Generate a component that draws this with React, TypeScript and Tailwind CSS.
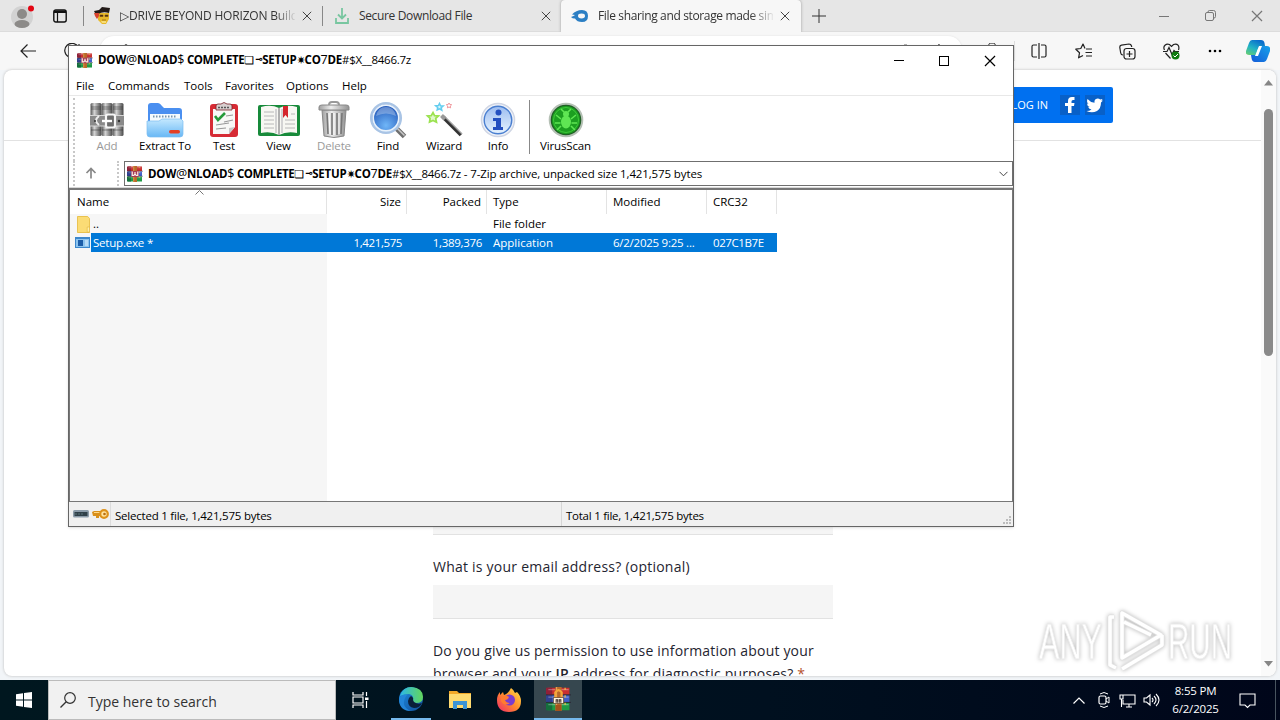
import React from "react";

type P = { className?: string };

const Archive = ({ className = "", lock = false }: P & { lock?: boolean }) => (
  <svg viewBox="0 0 32 32" className={className} preserveAspectRatio="none">
    <path d="M2 1h28v9H2z" fill="#c9302f" />
    <path d="M2 11h28v9H2z" fill="#3f5fc8" />
    <path d="M2 21h28v10H2z" fill="#1f9a45" />
    <path d="M0 1h8v9H0z" fill="#8f2038" />
    <path d="M0 11h8v9H0z" fill="#31408f" />
    <path d="M0 21h8v10H0z" fill="#146f3c" />
    <path d="M3 3.500h26M3 13.500h26M3 23.500h26" stroke="#fff" strokeOpacity=".3" strokeWidth="1.600" />
    <path d="M0 10.500h32M0 20.500h32" stroke="#251a2a" strokeOpacity=".7" strokeWidth="1.200" />
    <path d="M24.500 1v30" stroke="#f2c14a" strokeOpacity=".75" strokeWidth="2" strokeDasharray="3 7" />
    <rect x="12" y="0" width="8" height="32" fill="#b8692a" />
    <path d="M13.500 0v32" stroke="#e3a455" strokeWidth="1.500" />
    {lock ? (
      <>
        <path d="M12 15V7q4-6 8 0v8" fill="none" stroke="#f4a63a" strokeWidth="3" />
        <path d="M9.500 14h13v8h-13z" fill="#fff3dc" stroke="#4c2a10" strokeWidth=".8" />
        <path d="M13 21v-4h2v4M17 21v-4h2v4" fill="none" stroke="#3a2a22" strokeWidth="1.300" />
        <path d="M12.500 24h7v8h-7z" fill="#a3521c" />
      </>
    ) : (
      <>
        <rect x="8.500" y="10" width="15" height="12" rx="1.500" fill="#a83a55" />
        <path d="M10.500 11v8h3l2.500-3 2.500 3h3v-8M16 12v5" fill="none" stroke="#fbeee6" strokeWidth="2.400" />
      </>
    )}
  </svg>
);

const GrayArchive = () => (
  <svg viewBox="0 0 34 36" className="h-[36px] w-[34px]">
    <defs>
      <linearGradient id="bk" x1="0" x2="1">
        <stop offset="0" stopColor="#555" />
        <stop offset=".35" stopColor="#d5d5d5" />
        <stop offset="1" stopColor="#484848" />
      </linearGradient>
    </defs>
    {[0, 11, 22].map((x) => (
      <g key={x}>
        <rect x={x + 0.5} y="1" width="11" height="33" rx="1.500" fill="url(#bk)" />
        <path d={`M${x + 1} 5h10M${x + 1} 7h10M${x + 1} 28h10`} stroke="#333" strokeOpacity=".55" />
      </g>
    ))}
    <rect x="0" y="13" width="34" height="11" fill="#8a8a8a" />
    <path d="M0 13.500h34M0 24h34" stroke="#d5d5d5" />
    <path d="M9 14q-6 4.500 0 9" stroke="#eee" strokeWidth="2" fill="none" />
    <rect x="16" y="12.500" width="9" height="13" rx="2" fill="#6d6d6d" stroke="#f6f6f6" strokeWidth="2.200" />
    <path d="M12 19h10" stroke="#fff" strokeWidth="2.400" />
    <circle cx="29" cy="19" r="1.200" fill="#333" />
    <circle cx="5" cy="19" r="1" fill="#333" />
  </svg>
);

const ExtractIcon = () => (
  <svg viewBox="0 0 38 36" className="h-[36px] w-[38px]">
    <defs>
      <linearGradient id="fo" x1="0" y1="0" x2="0" y2="1">
        <stop offset="0" stopColor="#c4e8fe" />
        <stop offset="1" stopColor="#68b8f5" />
      </linearGradient>
    </defs>
    <path d="M2 4q0-3 3-3h7q2 0 4 3l2 2h15q3 0 3 3v18H2z" fill="#4a8ff0" />
    <rect x="4" y="12" width="30" height="12" fill="#f4fafd" />
    <path d="M7 14.500h24" stroke="#7996b0" strokeWidth="2" strokeDasharray="1.500 1.500" />
    <path d="M1 19h12l3-2h19l2 2v13q0 3-3 3H4q-3 0-3-3z" fill="url(#fo)" stroke="#7dbdf0" strokeWidth=".7" />
    <rect x="23" y="28" width="11" height="3.500" rx="1.700" fill="#e33f24" />
  </svg>
);

const TestIcon = () => (
  <svg viewBox="0 0 30 36" className="h-[36px] w-[30px]">
    <rect x="1" y="2" width="28" height="33" rx="3" fill="#d62b34" />
    <path d="M4 7h22v18l-6 7H4z" fill="#f8f8f6" />
    <path d="M26 25l-6 7v-6z" fill="#c8c8c8" />
    <path d="M7 8V4q0-2 2-2h3q3-3 6 0h3q2 0 2 2v4z" fill="#d8cfcf" stroke="#7a2229" strokeWidth=".8" />
    <path d="M9 5.500h12" stroke="#555" strokeWidth="1.500" strokeDasharray="2 1" />
    <path d="M6 14l3 4 7-7" stroke="#259a3a" strokeWidth="2.600" fill="none" />
    <path d="M17 14l7-1M15 20l9-2M7 23l13-2M7 27l10-1" stroke="#999" strokeWidth="1.200" />
  </svg>
);

const ViewIcon = () => (
  <svg viewBox="0 0 42 36" className="h-[36px] w-[42px]">
    <rect x="0" y="3" width="42" height="31" rx="2" fill="#178a3a" />
    <path d="M3 5q10-3 18 1 8-4 18-1v26q-10-2-18 2-8-4-18-2z" fill="#f7f7f2" />
    <path d="M21 6v27" stroke="#999" strokeWidth="1.500" />
    <path d="M18 7v24M24 7v24" stroke="#d3d3d3" strokeWidth="2" />
    <path d="M6 10h10M6 14h10M6 18h10M6 22h10M6 26h10M27 18h10M27 22h10M27 26h10M33 12h4" stroke="#b8b8b8" />
    <path d="M25 4h5v12l-2.500-3-2.500 3z" fill="#d4252c" />
  </svg>
);

const DeleteIcon = () => (
  <svg viewBox="0 0 32 38" className="h-[38px] w-[32px]">
    <defs>
      <linearGradient id="tr" x1="0" x2="1">
        <stop offset="0" stopColor="#a0a0a0" />
        <stop offset=".4" stopColor="#ececec" />
        <stop offset="1" stopColor="#929292" />
      </linearGradient>
    </defs>
    <path d="M4 9h24l-2 26q-10 3-20 0z" fill="url(#tr)" stroke="#888" />
    <path d="M9 12l1 21M14 12v22M19 12v22M24 12l-1 21" stroke="#777" strokeWidth="1.600" />
    <path d="M11 12l1 21M16 12v22M21 12v21" stroke="#fff" strokeWidth="1" />
    <path d="M1 6q0-2 3-2h24q3 0 3 2v3H1z" fill="url(#tr)" stroke="#888" />
    <path d="M11 4q0-3 3-3h4q3 0 3 3" fill="none" stroke="#999" strokeWidth="2" />
  </svg>
);

const FindIcon = () => (
  <svg viewBox="0 0 38 38" className="h-[38px] w-[38px]">
    <defs>
      <radialGradient id="gl" cx=".5" cy=".75" r=".8">
        <stop offset="0" stopColor="#70b6f8" />
        <stop offset="1" stopColor="#1547ad" />
      </radialGradient>
    </defs>
    <path d="M27 27l8.500 8.500" stroke="#6f6f6f" strokeWidth="5" />
    <path d="M27 26l8.500 8.500" stroke="#c9c9c9" strokeWidth="1.500" />
    <circle cx="17" cy="17" r="14.800" fill="url(#gl)" stroke="#a9c4e5" strokeWidth="2.500" />
    <circle cx="17" cy="17" r="12.800" fill="none" stroke="#e9f2fb" strokeWidth="1.700" />
    <path d="M7 15q2-9 10-9t10 9q-10-5-20 0z" fill="#fff" fillOpacity=".28" />
  </svg>
);

const WizardIcon = () => (
  <svg viewBox="0 0 38 38" className="h-[38px] w-[38px]">
    <path d="M18 16L36 34" stroke="#333" strokeWidth="3.800" />
    <path d="M19 15L37 33" stroke="#a5a5a5" strokeWidth="1.100" />
    <path d="M16.500 14.500l3.500 3.500" stroke="#999" strokeWidth="4" />
    <path d="M8 11.500l1.500 3.200 4 .2-2.800 2.500.8 3.800-3.500-1.800L4.500 21l.6-3.700L2.500 15l3.700-.4z" fill="#e0f8cc" stroke="#9be250" strokeWidth="1.700" />
    <path d="M14.500 2.500l1 2.200 2.700.2-2 1.700.6 2.600-2.300-1.300L12.200 9l.5-2.500-2-1.700 2.700-.2z" fill="#d9f6fd" stroke="#63cdef" strokeWidth="1.500" />
    <path d="M24 2l.8 1.500 1.900.2-1.400 1.300.3 1.900L24 6l-1.600.9.300-1.900-1.400-1.300 1.900-.2z" fill="#fff" stroke="#f0969c" strokeWidth="1" />
  </svg>
);

const InfoIcon = () => (
  <svg viewBox="0 0 36 36" className="h-[36px] w-[36px]">
    <defs>
      <linearGradient id="inf" x1="0" y1="0" x2="0" y2="1">
        <stop offset="0" stopColor="#9dbdf0" />
        <stop offset="1" stopColor="#e6f3fe" />
      </linearGradient>
    </defs>
    <circle cx="18" cy="18" r="16.500" fill="#f0f3f9" stroke="#d0d6e4" strokeWidth="1.500" />
    <circle cx="18" cy="18" r="13.800" fill="url(#inf)" stroke="#4a7fd0" strokeWidth="1.400" />
    <circle cx="18.500" cy="10.500" r="3" fill="#2450c0" />
    <path d="M13 16h8v9h2v3H13v-3h3v-6h-3z" fill="#2450c0" />
  </svg>
);

const VirusIcon = () => (
  <svg viewBox="0 0 36 36" className="h-[36px] w-[36px]">
    <circle cx="18" cy="18" r="16.300" fill="#1f5f24" stroke="#b5c0b5" strokeWidth="2" />
    <circle cx="18" cy="18" r="14" fill="#1c9f20" />
    <circle cx="18" cy="18" r="12.500" fill="none" stroke="#3fc83a" />
    <ellipse cx="18" cy="20" rx="5" ry="6.500" fill="#5fe653" />
    <circle cx="18" cy="12" r="3" fill="#5fe653" />
    <path d="M13 17l-5-4M12.500 21H7M13 24l-4 4M23 17l5-4M23.500 21H29M23 24l4 4M16 10l-3-3M20 10l3-3" stroke="#5fe653" strokeWidth="1.600" />
  </svg>
);

const X = ({ className = "" }: P) => (
  <svg viewBox="0 0 10 10" className={className}>
    <path d="M.8.8l8.400 8.400M9.200.8L.8 9.200" stroke="currentColor" strokeWidth="1" />
  </svg>
);

const ArchiveName = () => (
  <>
    <b>DOW</b><span className="text-[12.500px]">@</span><b>NLOAD</b><span className="text-[12.500px]">$</span> <b className="tracking-[-0.400px]">COMPLETE</b>
    <span className="inline-flex w-[18px] justify-between align-baseline font-['DejaVu_Sans'] text-[11px] font-bold leading-none tracking-tighter">
      <span>❏</span>
      <span className="text-[9px]">⊸</span>
    </span>
    <b>SETUP</b>
    <span className="font-['DejaVu_Sans'] text-[11px] font-bold tracking-[-1px]">✷</span>
    <b>CO</b><span className="text-[12.500px]">7</span><b>DE</b>#$X__8466.7z
  </>
);

const tools: { label: string; w: string; icon: React.ReactNode; off?: boolean }[] = [
  { label: "Add", w: "w-[56px]", icon: <GrayArchive />, off: true },
  { label: "Extract To", w: "w-[60px]", icon: <ExtractIcon /> },
  { label: "Test", w: "w-[58px]", icon: <TestIcon /> },
  { label: "View", w: "w-[51px]", icon: <ViewIcon /> },
  { label: "Delete", w: "w-[60px]", icon: <DeleteIcon />, off: true },
  { label: "Find", w: "w-[48px]", icon: <FindIcon /> },
  { label: "Wizard", w: "w-[64px]", icon: <WizardIcon /> },
  { label: "Info", w: "w-[44px]", icon: <InfoIcon /> },
];

const Tool = ({ label, w, icon, off }: (typeof tools)[number]) => (
  <div className={`flex shrink-0 flex-col items-center ${w} ${off ? "text-[#9a9a9a]" : "text-black"}`}>
    <div className="flex h-[40px] items-center justify-center">{icon}</div>
    <span className="-mt-[3px] whitespace-nowrap leading-[18px] tracking-[-0.150px]">{label}</span>
  </div>
);

const cols = "grid grid-cols-[257px_80px_80px_120px_100px_70px]";

function ArchiveWindow() {
  return (
    <div className="absolute left-[68px] top-[45px] flex h-[482px] w-[946px] flex-col border border-[#666] bg-white text-[11.500px] text-black shadow-sm">
      <div className="flex h-[29px] shrink-0 items-center pl-[8px]">
        <Archive className="h-[15px] w-[16px]" />
        <span className="ml-[5px] flex-1 whitespace-nowrap tracking-[-0.250px]"><ArchiveName /></span>
        <div className="flex w-[136px] items-center">
          <span className="flex w-[44px] justify-center"><span className="h-px w-[10px] bg-black" /></span>
          <span className="flex w-[45px] justify-center"><span className="size-[10px] border border-black" /></span>
          <span className="flex w-[47px] justify-center"><X className="size-[12px]" /></span>
        </div>
      </div>
      <div className="flex h-[21px] shrink-0 items-center border-b border-[#e8e8e8] pl-[7px] pt-[2px]">
        <span className="w-[32px]">File</span>
        <span className="w-[76px]">Commands</span>
        <span className="w-[41px]">Tools</span>
        <span className="w-[61px]">Favorites</span>
        <span className="w-[56px]">Options</span>
        <span>Help</span>
      </div>
      <div className="flex h-[65px] shrink-0 pt-[4px]">
        <div className="-mt-[2px] ml-[4px] mr-[4px] w-[2px] border-l-2 border-dotted border-[#c8c8c8]" />
        {tools.map((t) => <Tool key={t.label} {...t} />)}
        <div className="ml-[9px] h-[54px] w-px bg-[#888]" />
        <Tool label="VirusScan" w="w-[71px]" icon={<VirusIcon />} />
      </div>
      <div className="flex h-[27px] shrink-0 items-start border-b border-[#d6d6d6]">
        <div className="ml-[4px] h-[25px] w-[2px] border-l-2 border-dotted border-[#c8c8c8]" />
        <svg viewBox="0 0 12 12" className="ml-[10px] mt-[6px] size-[12px]"><path d="M6 11.500V1.500M1.500 6L6 1.500 10.500 6" fill="none" stroke="#888" strokeWidth="1.700" /></svg>
        <div className="ml-[20px] h-[25px] w-[2px] border-l-2 border-dotted border-[#c8c8c8]" />
        <div className="ml-[5px] flex h-[25px] flex-1 items-center border border-[#6f6f6f] pl-[2px]">
          <Archive className="h-[16px] w-[16px]" />
          <span className="ml-[5px] flex-1 whitespace-nowrap pt-px"><span className="tracking-[-0.250px]"><ArchiveName /></span><span className="tracking-[-0.120px]"> - 7-Zip archive, unpacked size 1,421,575 bytes</span></span>
          <svg viewBox="0 0 9 6" className="mr-[4px] h-[6px] w-[9px]"><path d="M.5.8l4 4 4-4" fill="none" stroke="#444" /></svg>
        </div>
      </div>
      <div className="flex h-[314px] shrink-0 flex-col border border-t-2 border-[#777]">
        <div className={`${cols} h-[24px] shrink-0 leading-[24px]`}>
          <span className="relative border-r border-[#e3e3e3] pl-[7px]">
            Name
            <svg viewBox="0 0 9 5" className="absolute left-[125px] top-0 h-[5px] w-[9px]"><path d="M.5 4.500l4-4 4 4" fill="none" stroke="#777" /></svg>
          </span>
          <span className="border-r border-[#e3e3e3] pr-[5px] text-right">Size</span>
          <span className="border-r border-[#e3e3e3] pr-[5px] text-right">Packed</span>
          <span className="border-r border-[#e3e3e3] pl-[6px]">Type</span>
          <span className="border-r border-[#e3e3e3] pl-[6px]">Modified</span>
          <span className="border-r border-[#e3e3e3] pl-[6px]">CRC32</span>
        </div>
        <div className={`${cols} h-[19px] shrink-0 leading-[20px]`}>
          <div className="flex items-center bg-[#f6f6f6] pl-[7px]">
            <svg viewBox="0 0 14 17" className="h-[17px] w-[13px]" preserveAspectRatio="none"><path d="M.5.500h11l2 2v14H.5z" fill="#fbdc75" stroke="#e8bf4b" /><path d="M11 11h2.500v5H11z" fill="#fff0a8" stroke="#e2b33a" strokeWidth=".6" /></svg>
            <span className="ml-[3px]">..</span>
          </div>
          <span /><span />
          <span className="pl-[6px]">File folder</span>
        </div>
        <div className="flex h-[19px] shrink-0 bg-[#f6f6f6]">
          <div className="flex w-[21px] items-center bg-[#f6f6f6] pl-[5px]">
            <svg viewBox="0 0 15 11" className="h-[11px] w-[15px]"><path d="M0 0h15v11H0z" fill="#3c87cc" /><path d="M1 2h13v8H1z" fill="#8cc4ef" /><path d="M3 3h5v6H3z" fill="#1c5da8" /><path d="M10 4h3M10 6h3M10 8h3" stroke="#e6f4ff" /></svg>
          </div>
          <div className="grid w-[686px] shrink-0 grid-cols-[236px_80px_80px_120px_100px_70px] bg-[#0078d7] leading-[20px] text-white">
            <span className="pl-[2px] tracking-[-0.200px]">Setup.exe *</span>
            <span className="pr-[5px] text-right tracking-[-0.400px]">1,421,575</span>
            <span className="pr-[5px] text-right tracking-[-0.300px]">1,389,376</span>
            <span className="pl-[6px]">Application</span>
            <span className="pl-[6px] tracking-[-0.250px]">6/2/2025 9:25 ...</span>
            <span className="pl-[6px] tracking-[-0.400px]">027C1B7E</span>
          </div>
          <div className="flex-1 bg-white" />
        </div>
        <div className="w-[257px] flex-1 bg-[#f6f6f6]" />
      </div>
      <div className="flex flex-1 items-center bg-[#f0f0f0]">
        <svg viewBox="0 0 16 8" className="ml-[4px] h-[8px] w-[16px]"><rect width="16" height="7.500" rx="1.500" fill="#8a9aa8" /><path d="M1.500 2h13v4h-13z" fill="#304049" /><path d="M2 4h9" stroke="#587078" strokeDasharray="2 1" /></svg>
        <svg viewBox="0 0 17 12" className="ml-[3px] h-[12px] w-[17px]"><path d="M0 4l2-1h8v5H7v2H4V8H1z" fill="#d9901c" /><path d="M2 4.500h8" stroke="#ffd98a" /><circle cx="12" cy="6" r="3.800" fill="#ffe4a0" stroke="#dd921c" strokeWidth="2.200" /><circle cx="12.500" cy="6" r="1.300" fill="#b86c10" /></svg>
        <div className="ml-px h-full w-px bg-[#dcdcdc]" />
        <span className="ml-[4px] w-[446px] pt-[3px] tracking-[-0.220px]">Selected 1 file, 1,421,575 bytes</span>
        <div className="h-full w-px bg-[#d6d6d6]" />
        <span className="ml-[4px] flex-1 pt-[3px] tracking-[-0.250px]">Total 1 file, 1,421,575 bytes</span>
        <svg viewBox="0 0 9 9" className="mb-px mr-[1px] size-[9px] self-end"><path d="M6 0h2v2H6zM3 3h2v2H3zM6 3h2v2H6zM0 6h2v2H0zM3 6h2v2H3zM6 6h2v2H6z" fill="#bcbcbc" /></svg>
      </div>
    </div>
  );
}

const Copilot = () => (
  <svg viewBox="0 0 24 22" className="h-[22px] w-[24px]">
    <defs>
      <linearGradient id="c1" x1="0" y1="1" x2=".6" y2="0"><stop offset="0" stopColor="#6fd06a" /><stop offset=".5" stopColor="#22b3c5" /><stop offset="1" stopColor="#0a6ecc" /></linearGradient>
      <linearGradient id="c2" x1="1" y1="0" x2="0" y2="1"><stop offset="0" stopColor="#16a2ea" /><stop offset="1" stopColor="#145bd8" /></linearGradient>
    </defs>
    <path d="M6 0h9q3 0 3.500 3l.5 3h-4q-2 0-3 3l-2 6H3q-4 0-3-4L3 3q1-3 3-3z" fill="url(#c1)" />
    <path d="M18 22H9q-3 0-3.500-4L5 15h4q2 0 3-3l2-6h7q4 0 3 5l-3 8q-1 3-3 3z" fill="url(#c2)" />
    <path d="M13 6h3l-4 10H9z" fill="#fff" />
  </svg>
);

function TabStrip() {
  return (
    <div className="flex h-[32px] shrink-0 items-center border-b border-[#dcdcdc] bg-[#e6e6e6] text-[12px] text-[#333]">
      <svg viewBox="0 0 24 26" className="ml-[11px] h-[26px] w-[24px]">
        <circle cx="11" cy="14" r="11" fill="#d2d2d2" />
        <circle cx="11" cy="11" r="5" fill="#8c8a88" />
        <ellipse cx="11" cy="21" rx="7.500" ry="4" fill="#8c8a88" />
        <circle cx="20" cy="5.500" r="3" fill="#e30613" />
      </svg>
      <svg viewBox="0 0 14 14" className="ml-[18px] size-[14px]"><rect x=".8" y="1" width="12.400" height="12" rx="2" fill="none" stroke="#111" strokeWidth="1.400" /><path d="M1 1.500h12v2.500H1z" fill="#111" /><path d="M4.500 4v9" stroke="#111" strokeWidth="1.200" /></svg>
      <div className="ml-[16px] h-[20px] w-px bg-[#888]" />
      <svg viewBox="0 0 17 17" className="ml-[10px] size-[17px]">
        <path d="M4 6h11v6l-3 5H8l-4-4z" fill="#e8b92a" />
        <path d="M0 4l5-1 3-3 8 1-1 5q-6-2-11 1l-3-1z" fill="#231b18" />
        <path d="M0 6h5v3L3 12 1 9z" fill="#d9442f" />
        <path d="M6 8h3v1.500H6zM11 8h3v1.500h-3zM8 13h4" fill="#3b2510" stroke="#7b4a15" strokeWidth=".6" />
        <path d="M7 14h5v2H8z" fill="#f6dd7a" />
      </svg>
      <span className="ml-[9px] w-[175px] overflow-hidden whitespace-nowrap tracking-[-0.180px] [mask-image:linear-gradient(to_right,#000_155px,transparent_177px)]">▷DRIVE BEYOND HORIZON Build</span>
      <X className="ml-[7px] size-[10px] text-[#444]" />
      <div className="ml-[10px] h-[20px] w-px bg-[#888]" />
      <svg viewBox="0 0 14 16" className="ml-[12px] h-[16px] w-[14px]"><path d="M7 0v10M3 6.500l4 4 4-4M1 10v5h12v-5" fill="none" stroke="#78c6a0" strokeWidth="1.800" /></svg>
      <span className="ml-[10px] w-[182px] whitespace-nowrap tracking-[-0.350px]">Secure Download File</span>
      <X className="size-[10px] text-[#444]" />
      <div className="-mb-px ml-[10px] flex h-[32px] w-[240px] items-center rounded-t-[4px] bg-[#f7f7f7] shadow-[0_0_3px_#999] [clip-path:inset(0_-3px)]">
        <svg viewBox="0 0 17 12" className="ml-[10px] h-[12px] w-[17px]"><path d="M0 7q3-1 4-2l-3-.500Q5 0 11 0q6 0 6 6t-6 6q-5 0-7-3.500Q2 9 0 7z" fill="#2c7fc4" /><ellipse cx="10.500" cy="6" rx="3.500" ry="2.400" fill="#f7f7f7" /></svg>
        <span className="ml-[10px] w-[175px] overflow-hidden whitespace-nowrap tracking-[-0.360px] [mask-image:linear-gradient(to_right,#000_152px,transparent_177px)]">File sharing and storage made simple</span>
        <X className="ml-[7px] size-[10px] text-[#444]" />
      </div>
      <svg viewBox="0 0 14 14" className="ml-[11px] size-[14px]"><path d="M7 0v14M0 7h14" stroke="#333" /></svg>
      <div className="flex-1" />
      <svg viewBox="0 0 10 10" className="mr-[36px] size-[10px]"><path d="M0 5.500h10" stroke="#777" /></svg>
      <svg viewBox="0 0 11 11" className="mr-[35px] size-[11px]"><path d="M3 2.500V2q0-1.500 1.500-1.500h4q2 0 2 2v4Q10.500 8 9 8" fill="none" stroke="#777" /><rect x=".5" y="2.500" width="8" height="8" rx="1.500" fill="none" stroke="#777" /></svg>
      <X className="mr-[17px] size-[12px] text-[#777]" />
    </div>
  );
}

function BrowserBar() {
  return (
    <div className="flex h-[38px] shrink-0 items-center bg-[#f7f7f7] text-[#222]">
      <svg viewBox="0 0 16 14" className="ml-[20px] h-[14px] w-[16px]"><path d="M16 7H1M7.500.5L1 7l6.500 6.500" fill="none" stroke="currentColor" strokeWidth="1.200" /></svg>
      <svg viewBox="0 0 16 16" className="ml-[28px] size-[16px]"><path d="M14.500 4.500A7.200 7.200 0 1 0 15 9M15 1v4h-4" fill="none" stroke="currentColor" strokeWidth="1.200" /></svg>
      <div className="ml-[20px] flex h-[30px] w-[862px] items-center rounded-[14px] bg-white pl-[19px] shadow-[0_0_2px_#ddd]">
        <svg viewBox="0 0 12 14" className="size-[14px]"><path d="M1 6h10v7H1zM3.500 6V2.500q2.500-4 5 0V6" fill="none" stroke="#555" /></svg>
        <span className="flex-1" />
        <svg viewBox="0 0 40 14" className="mr-[16px] h-[14px] w-[44px]"><path d="M0 1h3l2 2M35 0l2 4h4l-4 3 2 5-5-3-5 3 2-5-4-3h5z" fill="none" stroke="#666" /></svg>
      </div>
      <svg viewBox="0 0 16 16" className="ml-[22px] size-[16px]"><path d="M2 3h3q-1-3 3-3t3 3h3v12H2z" fill="none" stroke="currentColor" /></svg>
      <div className="ml-[14px] h-[20px] w-px bg-[#ddd]" />
      <svg viewBox="0 0 16 16" className="ml-[16px] size-[16px]"><path d="M8 0v16M6 2H2.500Q1 2 1 3.500v9Q1 14 2.500 14H6M10 2h3.500Q15 2 15 3.500v9q0 1.500-1.500 1.500H10" fill="none" stroke="currentColor" strokeWidth="1.200" /></svg>
      <svg viewBox="0 0 17 16" className="ml-[28px] h-[16px] w-[17px]"><path d="M10 5.500L8 1 5.800 5.500.8 6.200l3.700 3.600-.9 5L8 12.500M11 6h6M10.500 9.500H17M11 13h6" fill="none" stroke="currentColor" strokeWidth="1.200" strokeLinejoin="round" /></svg>
      <svg viewBox="0 0 17 17" className="ml-[27px] size-[17px]"><path d="M4 12q-2 0-2.300-2L.8 4.500Q.6 2.500 2.500 2.200L10 1q2 0 2.500 2l.2 1" fill="none" stroke="currentColor" strokeWidth="1.200" /><rect x="5" y="5.500" width="11" height="10.500" rx="2.500" fill="none" stroke="currentColor" strokeWidth="1.200" /><path d="M10.500 8v6M7.500 11h6" stroke="currentColor" strokeWidth="1.200" /></svg>
      <svg viewBox="0 0 17 17" className="ml-[27px] size-[17px]"><path d="M1.500 7Q0 4 2 2.200t4.500-.700L8.500 3.500l2-2q3-1 4.500.7T15.500 7M2.500 10l5 5.500M0 8.500h4l2-4 3 7 2-4 1 1h4" fill="none" stroke="currentColor" strokeWidth="1.200" /><circle cx="12.500" cy="12.500" r="4" fill="#107c10" /><path d="M10.500 12.500l1.500 1.500 3-3" fill="none" stroke="#fff" /></svg>
      <svg viewBox="0 0 14 4" className="ml-[28px] h-[4px] w-[14px]"><circle cx="2" cy="2" r="1.300" /><circle cx="7" cy="2" r="1.300" /><circle cx="12" cy="2" r="1.300" /></svg>
      <div className="ml-auto mr-[10px]"><Copilot /></div>
    </div>
  );
}

function WebPage() {
  return (
    <div className="mx-[4px] flex h-[606px] shrink-0 overflow-hidden rounded-[8px] bg-white shadow-[0_0_3px_#bbb]">
      <div className="flex flex-1 flex-col">
        <div className="flex h-[71px] shrink-0 items-start justify-end border-b border-[#e2e2e2] pr-[148px] pt-[17px]">
          <div className="flex h-[36px] w-[120px] items-center justify-end rounded-[2px] bg-[#0070f0] pr-[8px] font-['Open_Sans',sans-serif] text-[11px] text-white">
            <span className="whitespace-nowrap">LOG IN</span>
            <svg viewBox="0 0 20 20" className="ml-[12px] size-[20px]"><path d="M0 0h20v20H0z" fill="#0860c8" /><path d="M8 18v-7H5V8h3V6q0-4 4-4h2.500v3H13q-1.500 0-1.500 1.500V8h3l-.5 3h-2.500v7z" fill="#fff" /></svg>
            <svg viewBox="0 0 20 20" className="ml-[5px] size-[20px]"><path d="M0 0h20v20H0z" fill="#0860c8" /><path d="M18 5.500l-2 2q0 6-4 8.500-5 2.500-10.500 0 3 0 5-1.500-2.500-.5-3.300-2.500h1.500Q2 11 2 8.500l1.500.5Q1.200 7 2.500 4q3 3.500 7 3.800Q9 4 12.500 3.500q1.800 0 2.700 1L17.500 4l-1 1.800z" fill="#fff" /></svg>
          </div>
        </div>
        <div className="ml-[429px] flex w-[400px] flex-col pt-[360px] font-['Open_Sans',sans-serif] text-[14px] leading-[23px] text-[#1f2530]">
          <div className="h-[34px] shrink-0 border-b border-[#e2e2e2] bg-[#f5f5f5]" />
          <p className="mt-[20px] whitespace-nowrap tracking-[0.230px]">What is your email address? (optional)</p>
          <div className="mt-[7px] h-[34px] shrink-0 border-b border-[#e2e2e2] bg-[#f5f5f5]" />
          <p className="mt-[20px] whitespace-nowrap tracking-[0.180px]">Do you give us permission to use information about your<br />browser and your <span className="font-semibold">IP</span> address for diagnostic purposes? <span className="text-[#b5522c]">*</span></p>
        </div>
      </div>
      <div className="flex w-[15px] flex-col items-center bg-[#fafafa] pb-[9px] pt-[10px]">
        <svg viewBox="0 0 9 6" className="h-[6px] w-[9px]"><path d="M4.500 0L9 5.500H0z" fill="#868686" /></svg>
        <div className="mt-[23px] h-[247px] w-[9px] rounded-full bg-[#8a8a8a]" />
        <svg viewBox="0 0 9 6" className="mt-auto h-[6px] w-[9px]"><path d="M4.500 5.500L9 0H0z" fill="#868686" /></svg>
      </div>
    </div>
  );
}

const Watermark = () => (
  <svg viewBox="0 0 210 70" className="absolute left-[1030px] top-[605px] h-[70px] w-[210px] drop-shadow-[0_0_2px_#bbb]">
    <g fill="#fff" stroke="#ececec" strokeWidth=".9" fontFamily="'Liberation Sans Narrow','Liberation Sans',sans-serif" fontSize="50">
      <text x="9" y="54" textLength="63" lengthAdjust="spacingAndGlyphs">ANY</text>
      <text x="138" y="54" textLength="64" lengthAdjust="spacingAndGlyphs">RUN</text>
    </g>
    <g fill="none" strokeLinejoin="round">
      <path d="M92 8v45l39-23z M84 12h-4v48l6 3 M92 64l40-24v-10 M94 17l27 13" stroke="#e2e2e2" strokeWidth="5" />
      <path d="M92 8v45l39-23z M84 12h-4v48l6 3 M92 64l40-24v-10 M94 17l27 13" stroke="#fff" strokeWidth="3.500" />
    </g>
  </svg>
);

function Taskbar() {
  return (
    <div className="mt-[4px] flex h-[40px] shrink-0 bg-[linear-gradient(to_right,#00171f,#00101f_60%,#00061a)] text-white">
      <div className="flex w-[48px] items-center justify-center">
        <svg viewBox="0 0 16 16" className="size-[16px]"><path d="M0 2.200l7-1v6.400H0zM8 1l8-1v7.600H8zM0 8.400h7v6.400l-7-1zM8 8.400h8V16l-8-1z" fill="#fff" /></svg>
      </div>
      <div className="flex w-[288px] items-center border border-[#bbb] bg-[#f1f1f1] pl-[11px] text-[14px] text-[#333]">
        <svg viewBox="0 0 16 16" className="size-[16px]"><circle cx="10" cy="6" r="5.300" fill="none" stroke="#333" strokeWidth="1.200" /><path d="M6.200 9.800L.5 15.500" stroke="#333" strokeWidth="1.300" /></svg>
        <span className="ml-[12px] whitespace-nowrap pt-[2px]">Type here to search</span>
      </div>
      <div className="flex w-[49px] items-center justify-center">
        <svg viewBox="0 0 17 16" className="h-[16px] w-[17px]"><path d="M1 0v3h10V0M1 16v-3h10v3M1 5h10v6H1zM14.500 0v4M14.500 9v7" fill="none" stroke="#fff" strokeWidth="1.200" /><path d="M13 5.500h3.500V8H13z" fill="#fff" /></svg>
      </div>
      <div className="flex w-[51px] flex-col items-center">
        <div className="flex h-[38px] items-center">
          <svg viewBox="0 0 24 24" className="size-[24px]">
            <defs>
              <linearGradient id="e1" x1="0" x2="1"><stop offset="0" stopColor="#2cb7e8" /><stop offset="1" stopColor="#63d65a" /></linearGradient>
              <linearGradient id="e2" x1="0" y1="0" x2="1" y2="1"><stop offset="0" stopColor="#1d8ee0" /><stop offset="1" stopColor="#124f9c" /></linearGradient>
            </defs>
            <circle cx="12" cy="12" r="12" fill="url(#e2)" />
            <path d="M1 9Q4 0 12.500 0 24 1 24 10q0 6-7 6-4 0-3-3 1-5-4-6-5 0-9 2z" fill="url(#e1)" />
            <path d="M15 15q4 3 8 1-2 5-8 5-6-1-6-7 0-3 3-5 3 2 2 4z" fill="#0b203a" />
            <path d="M6 11q-4 9 6 13Q0 24 0 12q2-5 8-4z" fill="#2385d8" />
          </svg>
        </div>
        <div className="h-[2px] w-[40px] bg-[#76b9ed]" />
      </div>
      <div className="flex w-[48px] items-center justify-center">
        <svg viewBox="0 0 22 20" className="h-[20px] w-[22px]"><path d="M0 1h8l2 2h12v15H0z" fill="#f3a928" /><path d="M0 4h22v14H0z" fill="#ffdb70" /><path d="M4 19v-8h14v8h-4v-4H8v4z" fill="#3c94d5" /></svg>
      </div>
      <div className="flex w-[50px] items-center justify-center">
        <svg viewBox="0 0 24 24" className="size-[24px]">
          <defs><linearGradient id="ff" x1="1" y1="0" x2="0" y2="1"><stop offset="0" stopColor="#ffe54a" /><stop offset=".5" stopColor="#ff8a2c" /><stop offset="1" stopColor="#f0256c" /></linearGradient></defs>
          <path d="M14 0q3 2 4 5l2-1q4 4 4 9 0 11-12 11T0 12q0-5 3-8v3l3-3 1 3q4-1 7-7z" fill="url(#ff)" />
          <circle cx="12.500" cy="12" r="5.500" fill="#7a3ccf" />
          <path d="M4 9q5-3 8 0-1 3-4 3 1 3 5 3-6 4-9-2z" fill="#ff7b30" />
        </svg>
      </div>
      <div className="flex w-[48px] flex-col items-center bg-[#36474f]">
        <div className="flex h-[38px] items-center"><Archive lock className="h-[24px] w-[25px]" /></div>
        <div className="h-[2px] w-full bg-[#76b9ed]" />
      </div>
      <div className="flex flex-1 items-center justify-end">
        <svg viewBox="0 0 12 7" className="mr-[13px] h-[7px] w-[12px]"><path d="M.5 6.500L6 1l5.500 5.500" fill="none" stroke="#fff" strokeWidth="1.200" /></svg>
        <svg viewBox="0 0 12 18" className="mr-[9px] h-[18px] w-[12px]"><rect x="1" y="5" width="7" height="8" rx="1.500" fill="none" stroke="#fff" strokeWidth="1.200" /><path d="M8 8l3-2v6L8 10M2 3q4-3 8 0M2 15q4 3 8 0" fill="none" stroke="#fff" /></svg>
        <svg viewBox="0 0 17 15" className="mr-[7px] h-[15px] w-[17px]"><path d="M4 2h12v9H4V7M7 14h6M10 11v3M1 2h3v4H1zM2.500 6v8" fill="none" stroke="#fff" strokeWidth="1.100" /></svg>
        <svg viewBox="0 0 17 14" className="h-[14px] w-[17px]"><path d="M1 5h2.500L7 2v10L3.500 9H1zM9 5q2 2 0 4M11 3q4 4 0 8M13 1q6 6 0 12" fill="none" stroke="#fff" strokeWidth="1.100" /></svg>
        <div className="flex w-[71px] flex-col items-center text-[11.500px] leading-[18px] tracking-[-0.200px]"><span>8:55 PM</span><span>6/2/2025</span></div>
        <svg viewBox="0 0 17 17" className="ml-[8px] mr-[19px] size-[17px]"><path d="M1 2h15v11h-5l-2.500 2.500L6 13H1z" fill="none" stroke="#fff" strokeWidth="1.100" /></svg>
        <div className="h-full w-px bg-[#48545f]" />
        <div className="w-[4px]" />
      </div>
    </div>
  );
}

export default function App() {
  return (
    <div className="relative flex h-[720px] w-[1280px] flex-col overflow-hidden bg-[#f2f5f8] font-['Open_Sans','Noto_Sans','DejaVu_Sans',sans-serif]">
      <TabStrip />
      <BrowserBar />
      <WebPage />
      <Taskbar />
      <ArchiveWindow />
      <Watermark />
    </div>
  );
}
